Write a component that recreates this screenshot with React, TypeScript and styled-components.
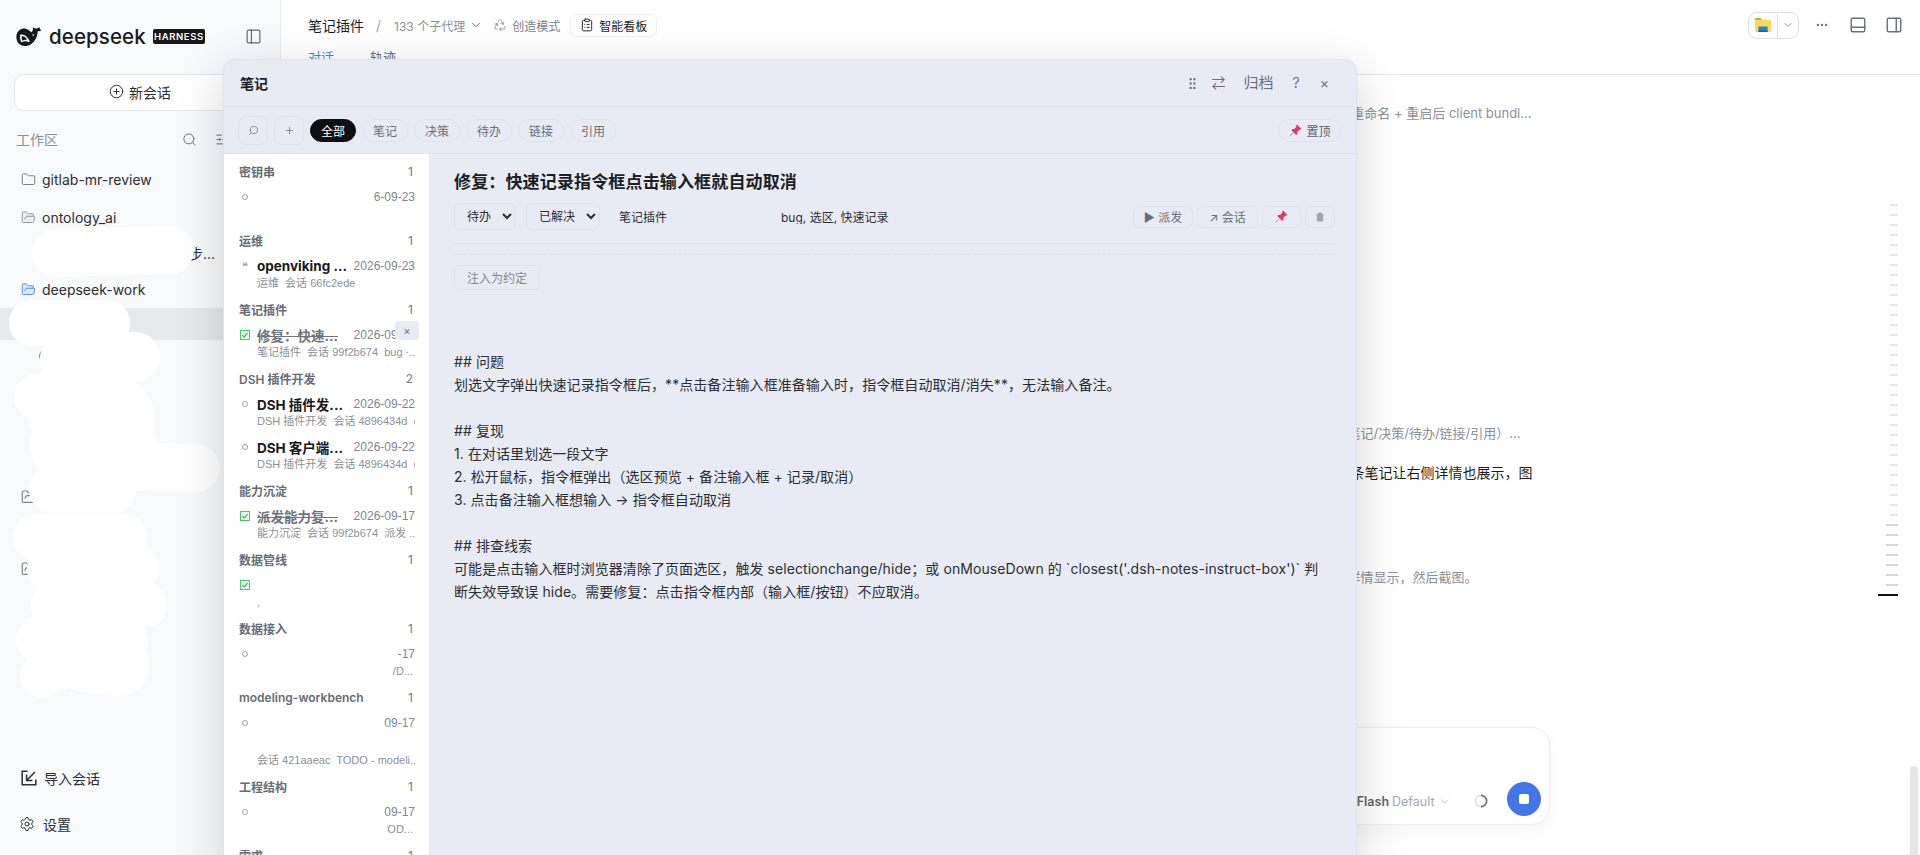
import React from "react";
import styled, { createGlobalStyle } from "styled-components";
import {
  ChevronDown,
  CirclePlus,
  ClipboardList,
  Ellipsis,
  Folder,
  FolderOpen,
  GripVertical,
  PanelBottom,
  PanelLeft,
  PanelRight,
  Plus,
  Recycle,
  Search,
  Settings,
  SlidersHorizontal,
  Trash,
} from "lucide-react";

const GlobalStyle = createGlobalStyle`
  html, body {
    margin: 0;
    height: 100%;
    overflow: hidden;
    background: #fff;
  }
  body, button, input, select {
    font-family: Inter, "Noto Sans CJK SC", "Noto Sans", sans-serif;
  }
  * { box-sizing: border-box; }
`;

const Page = styled.div`
  position: relative;
  display: flex;
  width: 100vw;
  height: 100vh;
  overflow: hidden;
`;

/* sidebar */

const Sidebar = styled.aside`
  position: relative;
  flex: 0 0 281px;
  display: flex;
  flex-direction: column;
  background: #f8f9fb;
  border-right: 1px solid #e9eaed;
`;

const Brand = styled.div`
  height: 72px;
  display: flex;
  align-items: center;
  padding: 0 18px 0 16px;
`;

const BrandName = styled.span`
  margin-left: 7px;
  font-size: 20.5px;
  font-weight: 500;
  letter-spacing: 0.1px;
  color: #1a1b1f;
`;

const HarnessBadge = styled.span`
  margin-left: 7px;
  height: 15px;
  width: 52px;
  display: flex;
  align-items: center;
  justify-content: center;
  border-radius: 2px;
  background: #17181c;
  color: #fff;
  font-size: 9.5px;
  font-weight: 600;
  letter-spacing: 0.6px;
`;

const BrandToggle = styled.span`
  margin-left: auto;
  display: flex;
  color: #5f646d;
`;

const NewChat = styled.button`
  margin: 2px 14px 0;
  height: 37px;
  display: flex;
  align-items: center;
  justify-content: center;
  gap: 5px;
  padding: 0 0 2px;
  background: #fff;
  border: 1px solid #e3e5e9;
  border-radius: 10px;
  color: #2b2e35;
  font-size: 14px;
`;

const WorkspaceBar = styled.div`
  margin-top: 10px;
  height: 36px;
  display: flex;
  align-items: center;
  gap: 18px;
  padding: 0 50px 0 16px;
  color: #8b9099;
  font-size: 14px;

  span {
    margin-right: auto;
  }
`;

const TreeList = styled.div`
  margin-top: 3px;
  display: flex;
  flex-direction: column;
`;

const TreeRow = styled.div<{ $h: number; $active?: boolean; $end?: boolean; $indent?: number }>`
  height: ${(p) => p.$h}px;
  display: flex;
  align-items: center;
  justify-content: ${(p) => (p.$end ? "flex-end" : "flex-start")};
  gap: 6px;
  padding: ${(p) => (p.$end ? "0 65px 0 0" : `0 0 0 ${p.$indent ?? 21}px`)};
  background: ${(p) => (p.$active ? "#e8e9eb" : "transparent")};
  color: #2b2e35;
  font-size: 14px;
`;

const FolderIcon = styled.span<{ $color: string; $fill?: string }>`
  display: flex;
  color: ${(p) => p.$color};

  svg {
    fill: ${(p) => p.$fill ?? "none"};
  }
`;

const Spinner = styled.span`
  display: flex;
  width: 12px;
  height: 12px;
  border-radius: 50%;
  border: 1.5px solid #22c55e;
`;

const SideFooter = styled.div`
  margin-top: auto;
  padding-bottom: 19px;
  display: flex;
  flex-direction: column;
  gap: 22px;
`;

const FootRow = styled.div<{ $gap: number; $pad: number }>`
  height: 24px;
  display: flex;
  align-items: center;
  gap: ${(p) => p.$gap}px;
  padding-left: ${(p) => p.$pad}px;
  color: #2b2e35;
  font-size: 14px;
`;

const RedactionLayer = styled.svg`
  position: absolute;
  left: 0;
  top: 0;
  pointer-events: none;
`;

/* main column */

const Main = styled.main`
  position: relative;
  flex: 1;
  min-width: 0;
  display: flex;
  flex-direction: column;
  background: #fff;
`;

const TopBar = styled.header`
  height: 50px;
  display: flex;
  align-items: center;
  padding: 0 17px 0 27px;
  flex: none;
`;

const Crumb = styled.span`
  color: #1d1f24;
  font-size: 14px;
`;

const CrumbSlash = styled.span`
  margin: 0 13px 0 12px;
  color: #a2a6ad;
  font-size: 14px;
`;

const AgentCount = styled.span`
  display: flex;
  align-items: center;
  gap: 4px;
  color: #8b9099;
  font-size: 12px;

  svg {
    color: #5f646d;
  }
`;

const ModeLabel = styled.span`
  margin-left: 10px;
  display: flex;
  align-items: center;
  gap: 5px;
  color: #7c818a;
  font-size: 12px;
`;

const BoardButton = styled.button`
  margin-left: 10px;
  height: 23px;
  width: 87px;
  display: flex;
  align-items: center;
  justify-content: center;
  gap: 5px;
  padding: 0;
  background: #fff;
  border: 1px solid #f0f0f2;
  border-radius: 6px;
  color: #1d1f24;
  font-size: 12px;
`;

const TopActions = styled.div`
  margin-left: auto;
  display: flex;
  align-items: center;
  color: #6b7078;
`;

const OpenWith = styled.div`
  width: 51px;
  height: 27px;
  display: flex;
  align-items: center;
  border: 1px solid #dedfe2;
  border-radius: 9px;
`;

const OpenWithIcon = styled.span`
  width: 29px;
  height: 100%;
  display: flex;
  align-items: center;
  justify-content: center;
  border-right: 1px solid #dedfe2;
`;

const OpenWithCaret = styled.span`
  flex: 1;
  display: flex;
  justify-content: center;
`;

const TopIcon = styled.span<{ $left: number }>`
  display: flex;
  margin-left: ${(p) => p.$left}px;
`;

const Tabs = styled.nav`
  height: 25px;
  flex: none;
  display: flex;
  gap: 36px;
  padding-left: 27px;
  border-bottom: 1px solid #e5e6e9;
`;

const Tab = styled.span<{ $active?: boolean }>`
  font-size: 13px;
  line-height: 15px;
  color: ${(p) => (p.$active ? "#4a7df0" : "#6b7078")};
`;

const Thread = styled.section`
  flex: 1;
  width: 898px;
  margin: 0 auto;
  display: flex;
  flex-direction: column;
`;

const ThreadLine = styled.div<{ $top: number; $end: number; $strong?: boolean }>`
  margin-top: ${(p) => p.$top}px;
  padding-right: ${(p) => p.$end}px;
  text-align: right;
  white-space: nowrap;
  font-size: ${(p) => (p.$strong ? 14 : 13)}px;
  line-height: 20px;
  color: ${(p) => (p.$strong ? "#1d1f24" : "#8b9099")};
`;

const Composer = styled.div`
  flex: none;
  width: 898px;
  height: 98px;
  margin: 0 auto 30px;
  padding: 0 8px 8px;
  display: flex;
  align-items: flex-end;
  justify-content: flex-end;
  background: #fff;
  border: 1px solid #eeeef0;
  border-radius: 18px;
  box-shadow: 0 6px 20px rgba(0, 0, 0, 0.04);
`;

const ModelLabel = styled.div`
  height: 34px;
  padding-top: 5px;
  display: flex;
  align-items: center;
  gap: 3px;
  color: #a4a8af;
  font-size: 12.5px;

  b {
    color: #5f646d;
    font-size: 12.5px;
    font-weight: 600;
  }
`;

const LoadingRing = styled.svg`
  margin: 0 19px 8px 23px;
`;

const StopButton = styled.button`
  width: 34px;
  height: 34px;
  padding: 0;
  display: flex;
  align-items: center;
  justify-content: center;
  border: 0;
  border-radius: 50%;
  background: #4276e8;

  i {
    width: 10px;
    height: 10px;
    border-radius: 2px;
    background: #fff;
  }
`;

const TickRail = styled.div`
  position: absolute;
  right: 22px;
  top: 204px;
  display: flex;
  flex-direction: column;
  align-items: flex-end;
  gap: 8px;
`;

const Tick = styled.i<{ $w: number; $color: string }>`
  display: block;
  height: 2px;
  width: ${(p) => p.$w}px;
  background: ${(p) => p.$color};
`;

const ScrollThumb = styled.div`
  position: absolute;
  right: 2px;
  top: 766px;
  bottom: -8px;
  width: 8px;
  border-radius: 4px;
  background: #e6e6e6;
`;

/* notes modal */

const NotesModal = styled.div`
  position: absolute;
  left: 223px;
  top: 59px;
  bottom: -20px;
  width: 1134px;
  display: flex;
  flex-direction: column;
  background: #e8ebf3;
  border: 1px solid #e0e3eb;
  border-radius: 12px;
  box-shadow: 0 12px 48px rgba(0, 0, 0, 0.17);
  overflow: hidden;
`;

const ModalHead = styled.div`
  flex: none;
  height: 47px;
  display: flex;
  align-items: center;
  padding: 0 27px 0 16px;
  border-bottom: 1px solid #dfe3ec;
`;

const ModalTitle = styled.span`
  margin-right: auto;
  color: #1d1f24;
  font-size: 14px;
  font-weight: 700;
`;

const HeadAction = styled.span<{ $left: number; $size?: number }>`
  margin-left: ${(p) => p.$left}px;
  display: flex;
  color: #6b7078;
  font-size: ${(p) => p.$size ?? 14}px;
  line-height: 20px;
`;

const Toolbar = styled.div`
  flex: none;
  height: 47px;
  display: flex;
  align-items: center;
  gap: 6px;
  padding: 0 14px;
  border-bottom: 1px solid #dfe3ec;
`;

const ToolSquare = styled.button`
  width: 30px;
  height: 29px;
  padding: 0;
  display: flex;
  align-items: center;
  justify-content: center;
  background: transparent;
  border: 1px solid #dfe3ec;
  border-radius: 8px;
  color: #6b7078;
`;

const FilterPill = styled.button<{ $on?: boolean }>`
  width: 46px;
  height: 23px;
  padding: 0;
  background: ${(p) => (p.$on ? "#0d0f12" : "transparent")};
  border: 1px solid ${(p) => (p.$on ? "#0d0f12" : "#dfe3ec")};
  border-radius: 12px;
  color: ${(p) => (p.$on ? "#fff" : "#6b7078")};
  font-size: 12px;
`;

const PinButton = styled.button`
  margin-left: auto;
  width: 64px;
  height: 23px;
  padding: 0;
  display: flex;
  align-items: center;
  justify-content: center;
  gap: 4px;
  background: transparent;
  border: 1px solid #dfe3ec;
  border-radius: 12px;
  color: #5f646d;
  font-size: 12px;
`;

const ModalBody = styled.div`
  flex: 1;
  min-height: 0;
  display: flex;
`;

const NoteList = styled.div`
  flex: 0 0 205px;
  padding: 4px 15px 0;
  background: #fff;
  overflow: hidden;
`;

const GroupHead = styled.div`
  height: 26px;
  display: flex;
  align-items: center;
  justify-content: space-between;
  color: #666c76;
  font-size: 12px;
  font-weight: 600;
  white-space: nowrap;
`;

const GroupCount = styled.span`
  margin-right: 1px;
  color: #6f7a8a;
  font-weight: 400;
`;

const NoteItem = styled.div<{ $tall?: boolean }>`
  position: relative;
  height: ${(p) => (p.$tall ? 63 : 43)}px;
  display: grid;
  grid-template-columns: 12px 90px 1fr;
  grid-template-rows: 26px 8px;
  column-gap: 6px;
  align-items: center;
  margin-right: -1px;
`;

const NoteMark = styled.span`
  display: flex;
  justify-content: center;
  color: #9aa0a8;
  font-size: 11px;
`;

const OpenDot = styled.i`
  width: 6px;
  height: 6px;
  border: 1px solid #9aa0a8;
  border-radius: 50%;
`;

const NoteTitle = styled.span<{ $done?: boolean }>`
  color: ${(p) => (p.$done ? "#6f747c" : "#17181c")};
  font-size: 13.5px;
  font-weight: 700;
  white-space: nowrap;
  overflow: hidden;
  text-decoration: ${(p) => (p.$done ? "line-through" : "none")};
`;

const NoteDate = styled.span`
  color: #80858d;
  font-family: "Liberation Sans", sans-serif;
  font-size: 12px;
  text-align: right;
  white-space: nowrap;
`;

const NoteMeta = styled.div<{ $end?: boolean; $drop?: number }>`
  grid-column: 2 / 4;
  margin-top: ${(p) => p.$drop ?? 0}px;
  padding-right: ${(p) => (p.$end ? 2 : 0)}px;
  color: #8b9099;
  font-family: "Liberation Sans", "Noto Sans CJK SC", sans-serif;
  font-size: 11px;
  line-height: 14px;
  text-align: ${(p) => (p.$end ? "right" : "left")};
  white-space: pre;
  overflow: hidden;
`;

const RowClose = styled.span`
  position: absolute;
  right: -4px;
  top: -1px;
  width: 24px;
  height: 19px;
  display: flex;
  align-items: center;
  justify-content: center;
  background: #e8ebf3;
  border-radius: 4px;
  color: #6b7078;
  font-size: 11px;
`;

const Detail = styled.div`
  flex: 1;
  min-width: 0;
  padding: 16px 21px 0 25px;
`;

const DetailTitle = styled.h2`
  margin: 0;
  color: #1d1f24;
  font-size: 17px;
  line-height: 24px;
  font-weight: 700;
  letter-spacing: 0.15px;
`;

const MetaRow = styled.div`
  margin-top: 9px;
  height: 27px;
  display: flex;
  align-items: center;
`;

const MetaSelect = styled.select<{ $w: number }>`
  width: ${(p) => p.$w}px;
  height: 27px;
  margin-right: 10px;
  padding: 0 4px 0 8px;
  background: transparent;
  border: 1px solid #dfe3ec;
  border-radius: 6px;
  color: #2b2e35;
  font-size: 12px;
`;

const MetaInput = styled.input<{ $w: number }>`
  width: ${(p) => p.$w}px;
  padding: 0;
  background: transparent;
  border: 0;
  outline: 0;
  color: #2b2e35;
  font-size: 12px;
  margin-left: 9px;

  & + & {
    margin-left: 0;
  }
`;

const DetailActions = styled.div`
  margin-left: auto;
  display: flex;
  gap: 4px;
`;

const DetailAction = styled.button<{ $w: number }>`
  width: ${(p) => p.$w}px;
  height: 22px;
  padding: 0;
  display: flex;
  align-items: center;
  justify-content: center;
  gap: 3px;
  background: transparent;
  border: 1px solid #dfe3ec;
  border-radius: 6px;
  color: #6b7078;
  font-size: 12px;
`;

const SolidRule = styled.div`
  margin-top: 13px;
  border-top: 1px solid #dfe3ec;
`;

const DashedRule = styled.div`
  margin-top: 10px;
  border-top: 1px dashed #dfe3ec;
`;

const InjectButton = styled.button`
  margin-top: 10px;
  width: 86px;
  height: 25px;
  padding: 0;
  display: block;
  background: transparent;
  border: 1px solid #dfe3ec;
  border-radius: 5px;
  color: #858a92;
  font-size: 12px;
`;

const NoteBody = styled.div`
  margin-top: 60px;
  padding-right: 6px;
  color: #2b2e35;
  font-size: 14px;
  line-height: 23px;
  letter-spacing: 0.07px;
  white-space: pre-wrap;
`;

const Whale = () => (
  <svg width="26" height="21" viewBox="0 0 25 20">
    <path
      fill="#17181c"
      d="M0.5 8.5C1.5 4 5.5 1.5 9.5 2.5c2.6.6 4 2.6 5.4 3.4 1.3-1 1.7-3 1.2-5 1.4 1.3 3 1.8 4.6 1.2l1.6-1.2c.3 1.6 1 2.5 2.2 3-1 .8-2.2 1-3.5 1-.3 5-2.4 9.4-6.3 12.2-4.4 3-9.6 2.5-12.4-.8C.6 14 .1 11 .5 8.5z"
    />
    <path fill="#f8f9fb" d="M4 8.2c3.6-.8 7 1.5 9 6.2.3.8-.2 1.4-.9 1-2.2-1.4-5-1-6.6.3-1.4-1.8-2.2-4.6-1.5-7.5z" />
    <path fill="#17181c" d="M5.6 9.8c2.4-.2 4.2 1.2 5 3.6-1.6-.3-3.4-.2-4.4.6-.7-1.3-.9-2.9-.6-4.2z" />
    <path fill="#f8f9fb" d="M15.2 8.2l2.4-.3-.8 1.6z" />
  </svg>
);

const ImportIcon = () => (
  <svg width="16" height="16" viewBox="0 0 16 16" fill="none" stroke="#2b2e35" strokeWidth="1.5">
    <path d="M6.5 1.2H1.2v13.6h13.6V9.5" />
    <path d="M14 2 6 10M5.6 4.6v5.8h5.8" />
  </svg>
);

const Pushpin = () => (
  <svg width="13" height="13" viewBox="0 0 13 13">
    <path fill="#e8325f" d="M8 .6l4.4 4.4-1 .8-.9-.2-2.3 2.3.1 2-1 1-5-5 1-1 2 .1L7.4 2.7l-.2-1z" />
    <path stroke="#9b9ea6" strokeWidth="1" d="M4.2 8.8.8 12.2" />
  </svg>
);

const ExplorerFolder = () => (
  <svg width="16" height="14" viewBox="0 0 16 14">
    <path fill="#e0a526" d="M0 1a1 1 0 0 1 1-1h4.5l1.6 2H0z" />
    <rect y="2" width="16" height="12" rx="1" fill="#ffd65c" />
    <path fill="#1f86d6" d="M3.4 8.5h9.2V14H3.4z" />
    <path fill="#0f6cb8" d="M3.4 12.5h9.2V14H3.4z" />
  </svg>
);

const CheckBox = () => (
  <svg width="10" height="10" viewBox="0 0 10 10" fill="none">
    <rect x=".5" y=".5" width="9" height="9" fill="#e6f8ec" stroke="#3ecf6a" />
    <path d="M2.4 5.2l1.8 1.7 3.4-3.8" stroke="#2fae58" strokeWidth="1.1" />
  </svg>
);

// paint strokes that hide private names in the original shot
const redactions: [string, number][] = [
  ["M56 253L170 250", 48],
  ["M32 323L107 323", 46],
  ["M65 360L135 357", 50],
  ["M38 397L90 397", 47],
  ["M75 420L110 420M75 445L112 445", 90],
  ["M60 465L196 468", 48],
  ["M52 490L113 490", 46],
  ["M36 537L124 537", 46],
  ["M52 568L134 568", 50],
  ["M53 605L145 605", 45],
  ["M40 640L124 640", 48],
  ["M42 676L60 668", 44],
  ["M85 660L118 664", 64],
];

type Note = {
  kind: "open" | "done" | "quote";
  title: string;
  date: string;
  meta: string;
  metaEnd?: boolean;
  tall?: boolean;
  closable?: boolean;
};

const groups: { name: string; count: number; notes: Note[] }[] = [
  { name: "密钥串", count: 1, notes: [{ kind: "open", title: "", date: "6-09-23", meta: "" }] },
  {
    name: "运维",
    count: 1,
    notes: [{ kind: "quote", title: "openviking ...", date: "2026-09-23", meta: "运维  会话 66fc2ede" }],
  },
  {
    name: "笔记插件",
    count: 1,
    notes: [
      {
        kind: "done",
        title: "修复：快速...",
        date: "2026-09-23",
        meta: "笔记插件  会话 99f2b674  bug ·...",
        closable: true,
      },
    ],
  },
  {
    name: "DSH 插件开发",
    count: 2,
    notes: [
      { kind: "open", title: "DSH 插件发...", date: "2026-09-22", meta: "DSH 插件开发  会话 4896434d  c" },
      { kind: "open", title: "DSH 客户端...", date: "2026-09-22", meta: "DSH 插件开发  会话 4896434d  c" },
    ],
  },
  {
    name: "能力沉淀",
    count: 1,
    notes: [{ kind: "done", title: "派发能力复...", date: "2026-09-17", meta: "能力沉淀  会话 99f2b674  派发 ..." }],
  },
  { name: "数据管线", count: 1, notes: [{ kind: "done", title: "", date: "", meta: "," }] },
  {
    name: "数据接入",
    count: 1,
    notes: [{ kind: "open", title: "", date: "-17", meta: "/D...", metaEnd: true }],
  },
  {
    name: "modeling-workbench",
    count: 1,
    notes: [{ kind: "open", title: "", date: "09-17", meta: "会话 421aaeac  TODO - modeli...", tall: true }],
  },
  {
    name: "工程结构",
    count: 1,
    notes: [{ kind: "open", title: "", date: "09-17", meta: "OD...", metaEnd: true }],
  },
  { name: "需求", count: 1, notes: [] },
];

const noteText = `## 问题
划选文字弹出快速记录指令框后，**点击备注输入框准备输入时，指令框自动取消/消失**，无法输入备注。

## 复现
1. 在对话里划选一段文字
2. 松开鼠标，指令框弹出（选区预览 + 备注输入框 + 记录/取消）
3. 点击备注输入框想输入 → 指令框自动取消

## 排查线索
可能是点击输入框时浏览器清除了页面选区，触发 selectionchange/hide；或 onMouseDown 的 \`closest('.dsh-notes-instruct-box')\` 判断失效导致误 hide。需要修复：点击指令框内部（输入框/按钮）不应取消。`;

const filters = ["全部", "笔记", "决策", "待办", "链接", "引用"];

const ticks = Array.from({ length: 40 }, (_, i) => i);

export default function App() {
  return (
    <Page>
      <GlobalStyle />
      <Sidebar>
        <Brand>
          <Whale />
          <BrandName>deepseek</BrandName>
          <HarnessBadge>HARNESS</HarnessBadge>
          <BrandToggle>
            <PanelLeft size={17} strokeWidth={1.6} />
          </BrandToggle>
        </Brand>
        <NewChat>
          <CirclePlus size={15} strokeWidth={1.6} />
          新会话
        </NewChat>
        <WorkspaceBar>
          <span>工作区</span>
          <Search size={15} strokeWidth={1.6} color="#6b7078" />
          <SlidersHorizontal size={15} strokeWidth={1.6} color="#6b7078" />
        </WorkspaceBar>
        <TreeList>
          <TreeRow $h={38}>
            <FolderIcon $color="#6f747c">
              <Folder size={15} strokeWidth={1.5} />
            </FolderIcon>
            gitlab-mr-review
          </TreeRow>
          <TreeRow $h={38}>
            <FolderIcon $color="#8b9099" $fill="#eceef1">
              <FolderOpen size={15} strokeWidth={1.5} />
            </FolderIcon>
            ontology_ai
          </TreeRow>
          <TreeRow $h={34} $end>
            步...
          </TreeRow>
          <TreeRow $h={38}>
            <FolderIcon $color="#5b8def" $fill="#dbe6fd">
              <FolderOpen size={15} strokeWidth={1.6} />
            </FolderIcon>
            deepseek-work
          </TreeRow>
          <TreeRow $h={32} $active />
          <TreeRow $h={32} $indent={39}>
            <Spinner />
          </TreeRow>
          <TreeRow $h={32} />
          <TreeRow $h={36} />
          <TreeRow $h={38} />
          <TreeRow $h={38}>
            <FolderIcon $color="#7f848d">
              <FolderOpen size={16} strokeWidth={1.8} />
            </FolderIcon>
          </TreeRow>
          <TreeRow $h={34} />
          <TreeRow $h={38}>
            <FolderIcon $color="#7f848d">
              <FolderOpen size={16} strokeWidth={1.8} />
            </FolderIcon>
          </TreeRow>
        </TreeList>
        <SideFooter>
          <FootRow $gap={7} $pad={21}>
            <ImportIcon />
            导入会话
          </FootRow>
          <FootRow $gap={8} $pad={19}>
            <Settings size={16} strokeWidth={1.5} />
            设置
          </FootRow>
        </SideFooter>
        <RedactionLayer width="230" height="720" fill="none" stroke="#fff" strokeLinecap="round">
          {redactions.map(([d, w]) => (
            <path key={d} d={d} strokeWidth={w} />
          ))}
        </RedactionLayer>
      </Sidebar>

      <Main>
        <TopBar>
          <Crumb>笔记插件</Crumb>
          <CrumbSlash>/</CrumbSlash>
          <AgentCount>
            133 个子代理
            <ChevronDown size={14} strokeWidth={1.5} />
          </AgentCount>
          <ModeLabel>
            <Recycle size={14} strokeWidth={1.3} />
            创造模式
          </ModeLabel>
          <BoardButton>
            <ClipboardList size={14} strokeWidth={1.6} />
            智能看板
          </BoardButton>
          <TopActions>
            <OpenWith>
              <OpenWithIcon>
                <ExplorerFolder />
              </OpenWithIcon>
              <OpenWithCaret>
                <ChevronDown size={12} strokeWidth={1.5} />
              </OpenWithCaret>
            </OpenWith>
            <TopIcon $left={16}>
              <Ellipsis size={14} strokeWidth={2} />
            </TopIcon>
            <TopIcon $left={20}>
              <PanelBottom size={18} strokeWidth={1.9} />
            </TopIcon>
            <TopIcon $left={18}>
              <PanelRight size={18} strokeWidth={1.9} />
            </TopIcon>
          </TopActions>
        </TopBar>
        <Tabs>
          <Tab $active>对话</Tab>
          <Tab>轨迹</Tab>
        </Tabs>
        <Thread>
          <ThreadLine $top={28} $end={18}>
            重命名 + 重启后 client bundl...
          </ThreadLine>
          <ThreadLine $top={300} $end={29}>
            笔记/决策/待办/链接/引用）...
          </ThreadLine>
          <ThreadLine $top={20} $end={17} $strong>
            条笔记让右侧详情也展示，图
          </ThreadLine>
          <ThreadLine $top={84} $end={72}>
            详情显示，然后截图。
          </ThreadLine>
        </Thread>
        <Composer>
          <ModelLabel>
            <b>Flash</b>
            Default
            <ChevronDown size={13} strokeWidth={1.5} />
          </ModelLabel>
          <LoadingRing width="14" height="14" viewBox="0 0 14 14" fill="none" strokeWidth="1.6">
            <circle cx="7" cy="7" r="5.6" stroke="#dcdde0" />
            <path d="M7 1.4A5.6 5.6 0 0 1 7 12.6" stroke="#6b7078" />
          </LoadingRing>
          <StopButton>
            <i />
          </StopButton>
        </Composer>
        <TickRail>
          {ticks.map((i) =>
            i === 39 ? (
              <Tick key={i} $w={20} $color="#111" />
            ) : (
              <Tick key={i} $w={i > 31 ? 12 : 8} $color={i > 31 ? "#d8d8da" : "#e4e4e6"} />
            ),
          )}
        </TickRail>
        <ScrollThumb />
      </Main>

      <NotesModal>
        <ModalHead>
          <ModalTitle>笔记</ModalTitle>
          <HeadAction $left={0}>
            <GripVertical size={15} strokeWidth={1.8} />
          </HeadAction>
          <HeadAction $left={12}>⇄</HeadAction>
          <HeadAction $left={18} $size={15}>
            归档
          </HeadAction>
          <HeadAction $left={19}>?</HeadAction>
          <HeadAction $left={20}>×</HeadAction>
        </ModalHead>
        <Toolbar>
          <ToolSquare>
            <Search size={11} strokeWidth={1.6} style={{ transform: "scaleX(-1)" }} />
          </ToolSquare>
          <ToolSquare>
            <Plus size={11} strokeWidth={1.6} />
          </ToolSquare>
          {filters.map((f, i) => (
            <FilterPill key={f} $on={i === 0}>
              {f}
            </FilterPill>
          ))}
          <PinButton>
            <Pushpin />
            置顶
          </PinButton>
        </Toolbar>
        <ModalBody>
          <NoteList>
            {groups.map((g) => (
              <div key={g.name}>
                <GroupHead>
                  {g.name}
                  <GroupCount>{g.count}</GroupCount>
                </GroupHead>
                {g.notes.map((n, i) => (
                  <NoteItem key={i} $tall={n.tall}>
                    <NoteMark>{n.kind === "done" ? <CheckBox /> : n.kind === "quote" ? "❝" : <OpenDot />}</NoteMark>
                    <NoteTitle $done={n.kind === "done"}>{n.title}</NoteTitle>
                    <NoteDate>{n.date}</NoteDate>
                    <NoteMeta $end={n.metaEnd} $drop={n.tall ? 40 : 0}>
                      {n.meta}
                    </NoteMeta>
                    {n.closable && <RowClose>×</RowClose>}
                  </NoteItem>
                ))}
              </div>
            ))}
          </NoteList>
          <Detail>
            <DetailTitle>修复：快速记录指令框点击输入框就自动取消</DetailTitle>
            <MetaRow>
              <MetaSelect $w={62} defaultValue="待办">
                <option>待办</option>
                <option>笔记</option>
              </MetaSelect>
              <MetaSelect $w={74} defaultValue="已解决">
                <option>已解决</option>
                <option>进行中</option>
              </MetaSelect>
              <MetaInput $w={162} readOnly value="笔记插件" />
              <MetaInput $w={120} readOnly value="bug, 选区, 快速记录" />
              <DetailActions>
                <DetailAction $w={60}>▶ 派发</DetailAction>
                <DetailAction $w={61}>↗ 会话</DetailAction>
                <DetailAction $w={39}>
                  <Pushpin />
                </DetailAction>
                <DetailAction $w={30}>
                  <Trash size={10} strokeWidth={1.5} fill="#a0a4ab" color="#a0a4ab" />
                </DetailAction>
              </DetailActions>
            </MetaRow>
            <SolidRule />
            <DashedRule />
            <InjectButton>注入为约定</InjectButton>
            <NoteBody>{noteText}</NoteBody>
          </Detail>
        </ModalBody>
      </NotesModal>
    </Page>
  );
}
